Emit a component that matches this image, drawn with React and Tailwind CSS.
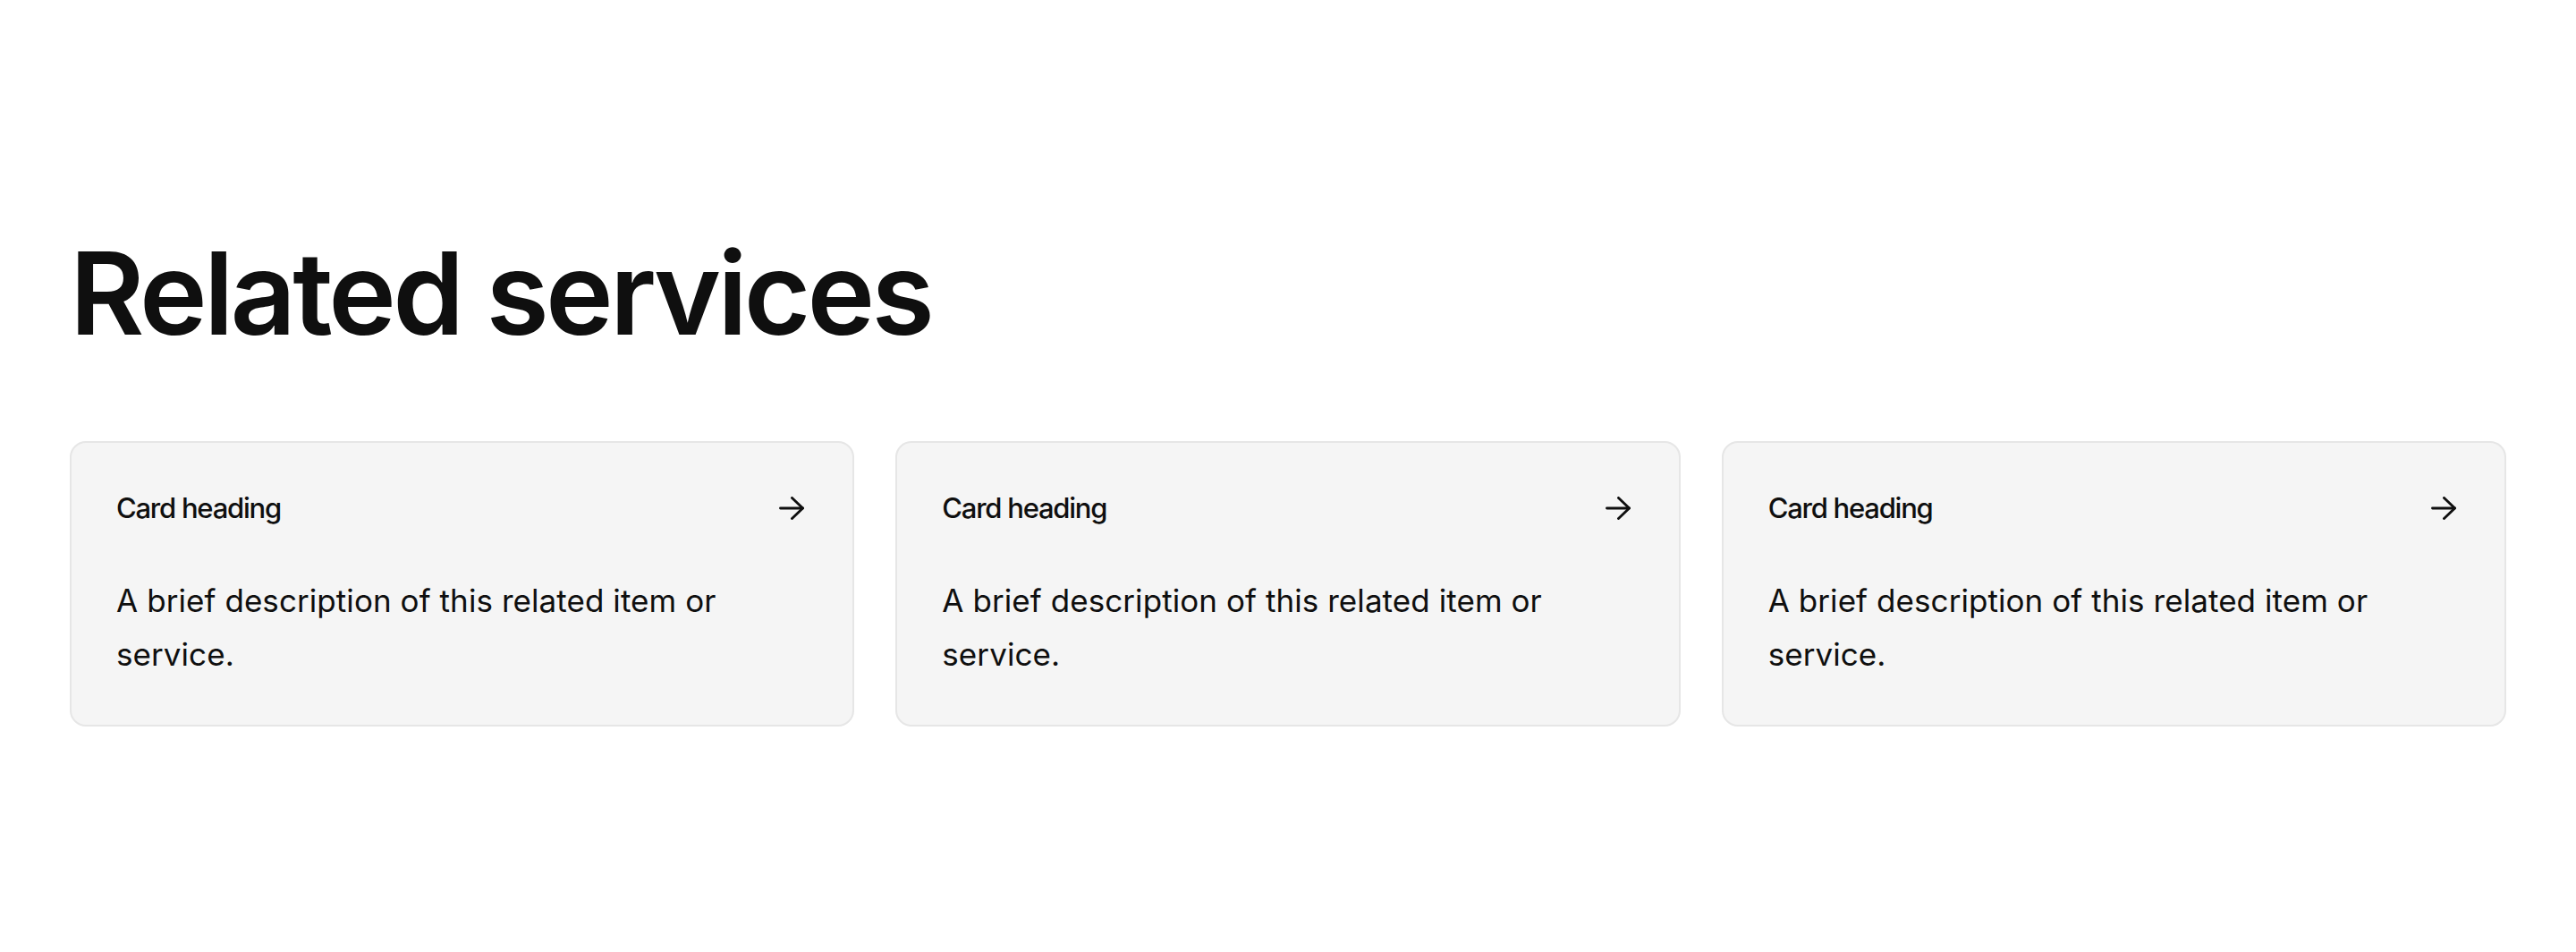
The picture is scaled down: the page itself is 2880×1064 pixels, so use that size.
import React from 'react';

const services = [
    { title: 'Card heading', text: 'A brief description of this related item or service.' },
    { title: 'Card heading', text: 'A brief description of this related item or service.' },
    { title: 'Card heading', text: 'A brief description of this related item or service.' },
];

const Arrow = () => (
    <svg width="28" height="26" viewBox="0 0 28 26" fill="none" stroke="currentColor" strokeWidth="2.9" strokeLinecap="round" strokeLinejoin="round">
        <path d="M1.5 13h25" />
        <path d="M14.5 1.5 26.5 13 14.5 24.5" />
    </svg>
);

const ServiceCard = ({ title, text }) => (
    <a href="#" className="flex flex-col rounded-[18px] border-2 border-[#e6e6e6] bg-[#f5f5f5] pl-[50px] pr-[54px] pt-[53px] pb-[49px] text-[#0f0f0f]">
        <div className="flex items-center justify-between">
            <h3 className="text-[31px] leading-[40px] font-medium tracking-[-0.04em]">{title}</h3>
            <Arrow />
        </div>
        <p className="mt-[53px] text-[35px] leading-[60px] tracking-[0.002em]">{text}</p>
    </a>
);

export default function App() {
    return (
        <div className="min-h-[1064px] bg-white font-['Inter',sans-serif]">
            <section className="px-[78px] pt-[253px]">
                <h2 className="text-[128px] leading-[150px] font-semibold tracking-[-0.03em] text-[#0f0f0f]">Related services</h2>
                <div className="mt-[90px] grid grid-cols-3 gap-[46px]">
                    {services.map((s, i) => (
                        <ServiceCard key={i} title={s.title} text={s.text} />
                    ))}
                </div>
            </section>
        </div>
    );
}
